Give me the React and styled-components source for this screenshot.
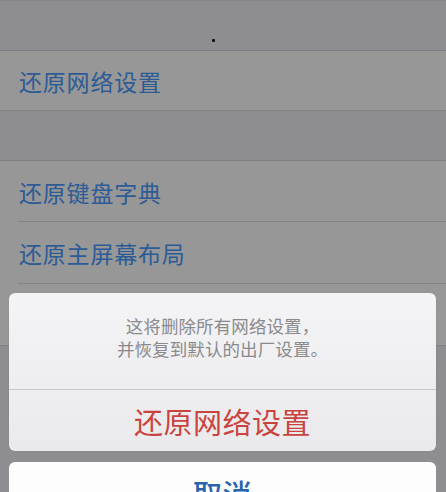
import React from "react";
import styled, { createGlobalStyle } from "styled-components";

const Global = createGlobalStyle`
  html, body { margin: 0; padding: 0; }
  body {
    width: 446px;
    height: 492px;
    overflow: hidden;
    background: #8e8e93;
    font-family: "Noto Sans CJK SC", "Noto Sans", sans-serif;
  }
`;

const Screen = styled.div`
  position: relative;
  width: 446px;
  height: 492px;
  overflow: hidden;
  background: #8e8d92;
`;

const List = styled.div`
  display: flex;
  flex-direction: column;
`;

const GroupGap = styled.div`
  height: ${(p) => p.$h}px;
  border-top: ${(p) => (p.$top ? "1px solid #858489" : "none")};
  box-sizing: border-box;
`;

const Group = styled.div`
  display: flex;
  flex-direction: column;
  background: #979797;
  border-top: 1px solid #7e7e80;
  border-bottom: 1px solid #828284;
`;

const Row = styled.div`
  height: ${(p) => p.$h || 60}px;
  display: flex;
  align-items: center;
  padding-left: 19px;
  box-sizing: border-box;
  position: relative;
  font-size: 23px;
  color: #2d5b96;
  letter-spacing: 0.8px;
  &:not(:last-child)::after {
    content: "";
    position: absolute;
    left: 18px;
    right: 0;
    bottom: 0;
    height: 1px;
    background: #838385;
  }
`;

const Dot = styled.span`
  position: absolute;
  left: 212px;
  top: 39px;
  width: 3px;
  height: 3px;
  background: #111;
  border-radius: 1px;
`;

const SheetWrap = styled.div`
  position: absolute;
  left: 9px;
  right: 10px;
  top: 293px;
  display: flex;
  flex-direction: column;
  gap: 11px;
`;

const Sheet = styled.div`
  border-radius: 6px;
  overflow: hidden;
  background: linear-gradient(#f4f4f6, #eaeaec);
  display: flex;
  flex-direction: column;
  box-shadow: 0 0 1px rgba(0, 0, 0, 0.25);
`;

const Message = styled.div`
  height: 97px;
  display: flex;
  flex-direction: column;
  align-items: center;
  justify-content: center;
  padding-bottom: 8px;
  box-sizing: border-box;
  font-size: 17.5px;
  line-height: 23px;
  letter-spacing: 0.1px;
  color: #8a8a8c;
  border-bottom: 1px solid #c9c9cb;
  text-align: center;
`;

const Action = styled.div`
  height: 61px;
  display: flex;
  align-items: center;
  justify-content: center;
  font-size: 29px;
  color: ${(p) => p.$color};
  letter-spacing: 0.5px;
`;

const Cancel = styled(Action)`
  background: #fdfdfd;
  border-radius: 6px;
  font-weight: 500;
  height: 62px;
  box-sizing: border-box;
`;

export default function App() {
  return (
    <>
      <Global />
      <Screen>
        <List>
          <GroupGap $h={50} $top />
          <Group>
            <Row $h={59}>还原网络设置</Row>
          </Group>
          <GroupGap $h={49} />
          <Group>
            <Row $h={61}>还原键盘字典</Row>
            <Row $h={62}>还原主屏幕布局</Row>
            <Row $h={61}></Row>
          </Group>
        </List>
        <Dot />
        <SheetWrap>
          <Sheet>
            <Message>
              <div>这将删除所有网络设置，</div>
              <div>并恢复到默认的出厂设置。</div>
            </Message>
            <Action $color="#c9443e">还原网络设置</Action>
          </Sheet>
          <Cancel $color="#2a63ae">取消</Cancel>
        </SheetWrap>
      </Screen>
    </>
  );
}
